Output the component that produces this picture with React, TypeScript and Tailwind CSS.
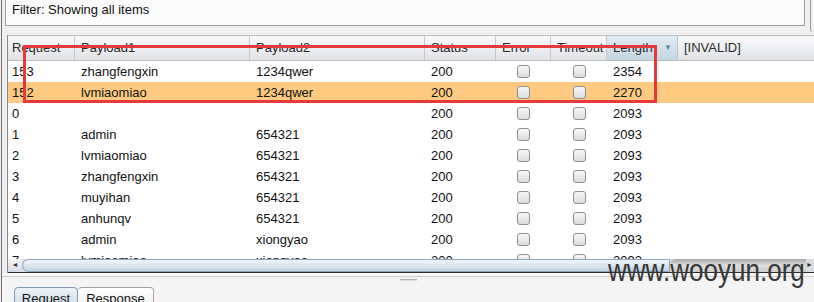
import React from 'react';

interface Row {
  id: string;
  p1: string;
  p2: string;
  status: string;
  length: string;
  selected?: boolean;
}

const rows: Row[] = [
  { id: '153', p1: 'zhangfengxin', p2: '1234qwer', status: '200', length: '2354' },
  { id: '152', p1: 'lvmiaomiao', p2: '1234qwer', status: '200', length: '2270', selected: true },
  { id: '0', p1: '', p2: '', status: '200', length: '2093' },
  { id: '1', p1: 'admin', p2: '654321', status: '200', length: '2093' },
  { id: '2', p1: 'lvmiaomiao', p2: '654321', status: '200', length: '2093' },
  { id: '3', p1: 'zhangfengxin', p2: '654321', status: '200', length: '2093' },
  { id: '4', p1: 'muyihan', p2: '654321', status: '200', length: '2093' },
  { id: '5', p1: 'anhunqv', p2: '654321', status: '200', length: '2093' },
  { id: '6', p1: 'admin', p2: 'xiongyao', status: '200', length: '2093' },
  { id: '7', p1: 'lvmiaomiao', p2: 'xiongyao', status: '200', length: '2093' },
];

const cols = 'grid grid-cols-[67px_175px_175px_71px_55px_56px_71px_1fr]';

const Checkbox: React.FC = () => (
  <span className="block w-[13px] h-[13px] rounded-[3px] border border-[#8d8f91] bg-gradient-to-b from-[#f7f7f7] to-[#dadcdf]" />
);

const HeaderCell: React.FC<{ label: string; first?: boolean }> = ({ label, first }) => (
  <div className={`flex items-center border-r border-[#c6c8cc] ${first ? 'pl-[4px]' : 'pl-[6px]'}`}>
    {label}
  </div>
);

const App: React.FC = () => {
  return (
    <div className="relative w-[814px] h-[302px] overflow-hidden bg-[#f0f0f0] pl-[1px] font-['Liberation_Sans',Arial,sans-serif] text-[13px] text-[#111]">
      <div className="flex flex-col h-full border-l border-[#6f6f6f]">
        {/* filter bar */}
        <div className="flex h-[26px] shrink-0">
          <div className="ml-[3px] -mt-px w-[801px] h-[27px] border border-[#9c9c9c] bg-[#fbfbfb] pl-[6px] pt-[2px] leading-[16px]">
            Filter: Showing all items
          </div>
          <div className="ml-[5px] w-[4px] h-[32px] border-l border-[#9c9c9c] rounded-bl-[3px]" />
        </div>

        {/* results table */}
        <div className="mt-[9px] ml-[5px] flex flex-col h-[238px] border-l border-[#8b8b8b] bg-white">
          <div className={`${cols} h-[26px] shrink-0 border-t border-b border-[#b9bcc0] bg-gradient-to-b from-[#f9f9fa] to-[#e1e3e7] text-[#2a2a2a]`}>
            <HeaderCell label="Request" first />
            <HeaderCell label="Payload1" />
            <HeaderCell label="Payload2" />
            <HeaderCell label="Status" />
            <HeaderCell label="Error" />
            <HeaderCell label="Timeout" />
            <div className="flex items-center justify-between pl-[6px] pr-[5px] border-r border-[#b3c3d0] bg-gradient-to-b from-[#e2ecf3] to-[#c3d5e2]">
              <span>Length</span>
              <span className="text-[8px] text-[#5d86a6]">▼</span>
            </div>
            <div className="flex items-center pl-[6px]">[INVALID]</div>
          </div>

          <div className="flex-1 overflow-hidden">
            {rows.map((r) => (
              <div
                key={r.id}
                className={`${cols} h-[21px] items-center ${r.selected ? 'bg-[#fec981]' : ''}`}
              >
                <div className="pl-[4px]">{r.id}</div>
                <div className="pl-[6px]">{r.p1}</div>
                <div className="pl-[6px]">{r.p2}</div>
                <div className="pl-[6px]">{r.status}</div>
                <div className="flex justify-center"><Checkbox /></div>
                <div className="flex justify-center"><Checkbox /></div>
                <div className="pl-[6px]">{r.length}</div>
                <div />
              </div>
            ))}
          </div>

          {/* horizontal scrollbar */}
          <div className="flex h-[14px] shrink-0 border-b border-[#2e2e2e] bg-[#d9dde1]">
            <div className="w-[14px] flex items-center justify-center bg-gradient-to-b from-[#f4f6f8] to-[#d6dde4] text-[7px] text-[#333]">◄</div>
            <div className="w-[648px] rounded-l-[9px] border border-[#8ea5ba] bg-gradient-to-b from-[#f1f5f9] via-[#dbe6ef] to-[#c2d3e2]" />
            <div className="flex-1 rounded-l-[6px] bg-gradient-to-b from-[#a8a8a8] via-[#dedede] to-[#cdcdcd]" />
            <div className="w-[8px] flex items-center text-[7px] text-[#333]">►</div>
          </div>
        </div>

        {/* bottom pane */}
        <div className="flex-1 flex flex-col bg-[#f4f4f4]">
          <div className="h-[3px] bg-[#f8f8f8]" />
          <div className="h-[9px] border-t border-[#cfcfcf] flex justify-center pt-[2px]">
            <div className="w-[17px] h-[2px] border-t border-[#aeb0b3] bg-[#dcdcdc]" />
          </div>
          <div className="flex pl-[12px] pt-[2px]">
            <div className="w-[64px] h-[20px] rounded-t-[4px] border border-[#8799ad] bg-gradient-to-b from-[#edf2f7] to-[#cfdde9] flex justify-center pt-[3px] leading-[15px]">
              Request
            </div>
            <div className="w-[76px] h-[20px] rounded-t-[4px] border border-l-0 border-[#a3a3a3] bg-gradient-to-b from-white to-[#efefef] flex justify-center pt-[3px] leading-[15px]">
              Response
            </div>
          </div>
        </div>
      </div>

      {/* annotation box drawn over the table */}
      <div className="absolute left-[23px] top-[45px] w-[634px] h-[58px] border-[3px] border-[#e5393b] pointer-events-none" />

      {/* watermark */}
      <div className="absolute left-[608px] top-[255px] origin-left scale-x-[0.84] whitespace-nowrap text-[31px] leading-none text-[#383838]">
        www.wooyun.org
      </div>
    </div>
  );
};

export default App;
